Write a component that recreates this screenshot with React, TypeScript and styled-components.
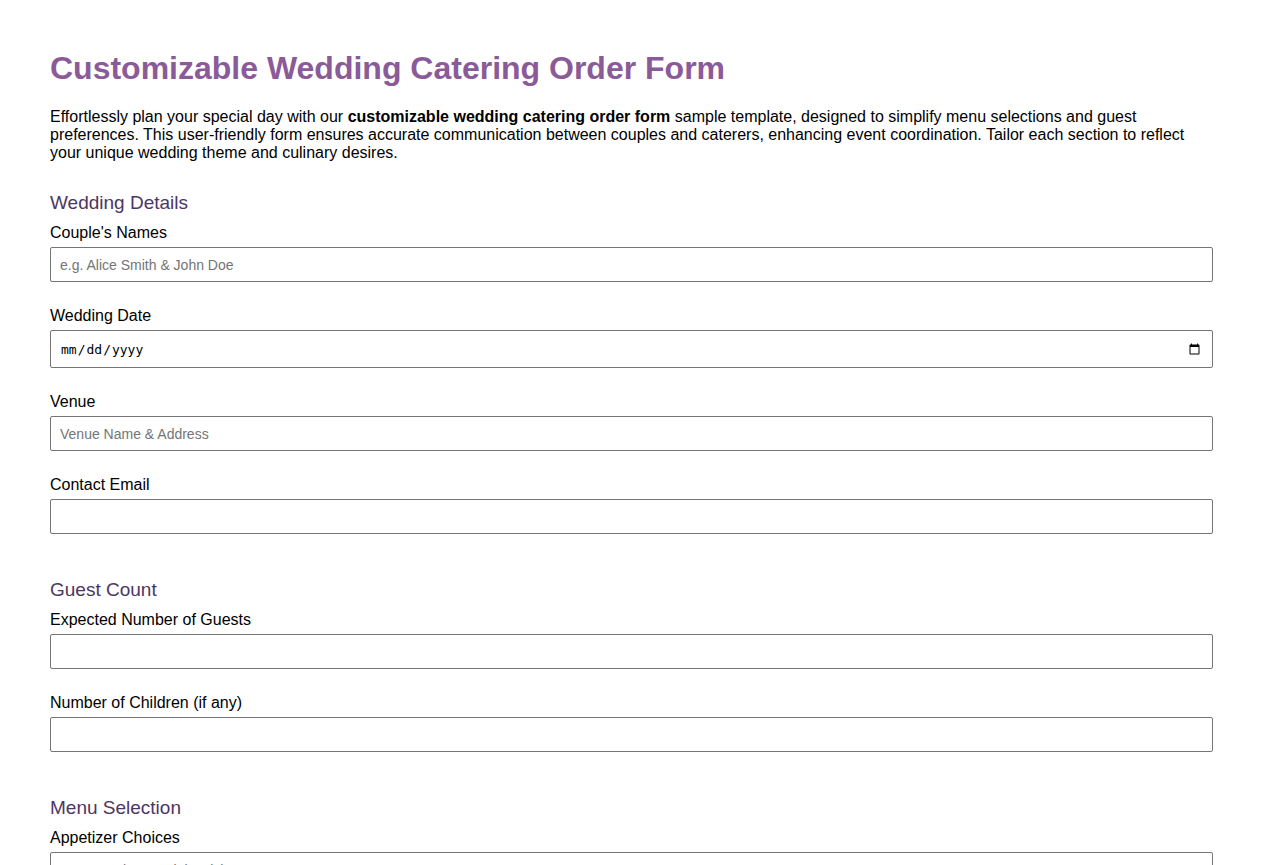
import React from "react";
import styled, { createGlobalStyle } from "styled-components";

const Global = createGlobalStyle`
  html, body { margin: 0; padding: 0; background: #ffffff; }
  body { font-family: "Liberation Sans", Arial, sans-serif; color: #000; }
  * { box-sizing: border-box; }
`;

const Page = styled.div`
  padding: 50px 50px 40px 50px;
`;

const Title = styled.h1`
  margin: 0 0 21px 0;
  font-size: 32px;
  line-height: 37px;
  font-weight: 700;
  color: #8a5a99;
`;

const Intro = styled.p`
  margin: 0 0 30px 0;
  font-size: 16px;
  line-height: 18px;
`;

const Section = styled.section`
  margin-bottom: 45px;
`;

const SectionTitle = styled.h2`
  margin: 0 0 10px 0;
  font-size: 19px;
  line-height: 22px;
  font-weight: 400;
  color: #4d3663;
`;

const Field = styled.div`
  display: flex;
  flex-direction: column;
  margin-bottom: 25px;
`;

const Label = styled.label`
  font-size: 16px;
  line-height: 18px;
  margin-bottom: 5px;
`;

const Input = styled.input<{ $mono?: boolean }>`
  width: 100%;
  height: ${(p) => (p.$mono ? "38px" : "35px")};
  padding: 0 9px;
  border: 1px solid #767676;
  border-radius: 2px;
  font-family: ${(p) =>
    p.$mono ? '"DejaVu Sans Mono", monospace' : '"Liberation Sans", Arial, sans-serif'};
  font-size: ${(p) => (p.$mono ? "13px" : "14px")};
  color: #000;
  background: #fff;
  &::placeholder { color: #757575; }
`;

const TextArea = styled.textarea`
  width: 100%;
  height: 80px;
  padding: 9px 9px;
  border: 1px solid #767676;
  border-radius: 2px;
  font-family: "Liberation Sans", Arial, sans-serif;
  font-size: 14px;
  resize: vertical;
  &::placeholder { color: #757575; }
`;

export default function App() {
  return (
    <>
      <Global />
      <Page>
        <Title>Customizable Wedding Catering Order Form</Title>
        <Intro>
          Effortlessly plan your special day with our <strong>customizable wedding catering order form</strong> sample template, designed to simplify menu selections and guest preferences. This user-friendly form ensures accurate communication between couples and caterers, enhancing event coordination. Tailor each section to reflect your unique wedding theme and culinary desires.
        </Intro>

        <Section>
          <SectionTitle>Wedding Details</SectionTitle>
          <Field>
            <Label htmlFor="names">Couple's Names</Label>
            <Input id="names" placeholder="e.g. Alice Smith & John Doe" />
          </Field>
          <Field>
            <Label htmlFor="date">Wedding Date</Label>
            <Input id="date" type="date" $mono />
          </Field>
          <Field>
            <Label htmlFor="venue">Venue</Label>
            <Input id="venue" placeholder="Venue Name & Address" />
          </Field>
          <Field>
            <Label htmlFor="email">Contact Email</Label>
            <Input id="email" type="email" />
          </Field>
        </Section>

        <Section>
          <SectionTitle>Guest Count</SectionTitle>
          <Field>
            <Label htmlFor="guests">Expected Number of Guests</Label>
            <Input id="guests" type="number" />
          </Field>
          <Field>
            <Label htmlFor="children">Number of Children (if any)</Label>
            <Input id="children" type="number" />
          </Field>
        </Section>

        <Section>
          <SectionTitle>Menu Selection</SectionTitle>
          <Field>
            <Label htmlFor="appetizers">Appetizer Choices</Label>
            <TextArea id="appetizers" placeholder="e.g. Bruschetta, Mini Quiches" />
          </Field>
        </Section>
      </Page>
    </>
  );
}
